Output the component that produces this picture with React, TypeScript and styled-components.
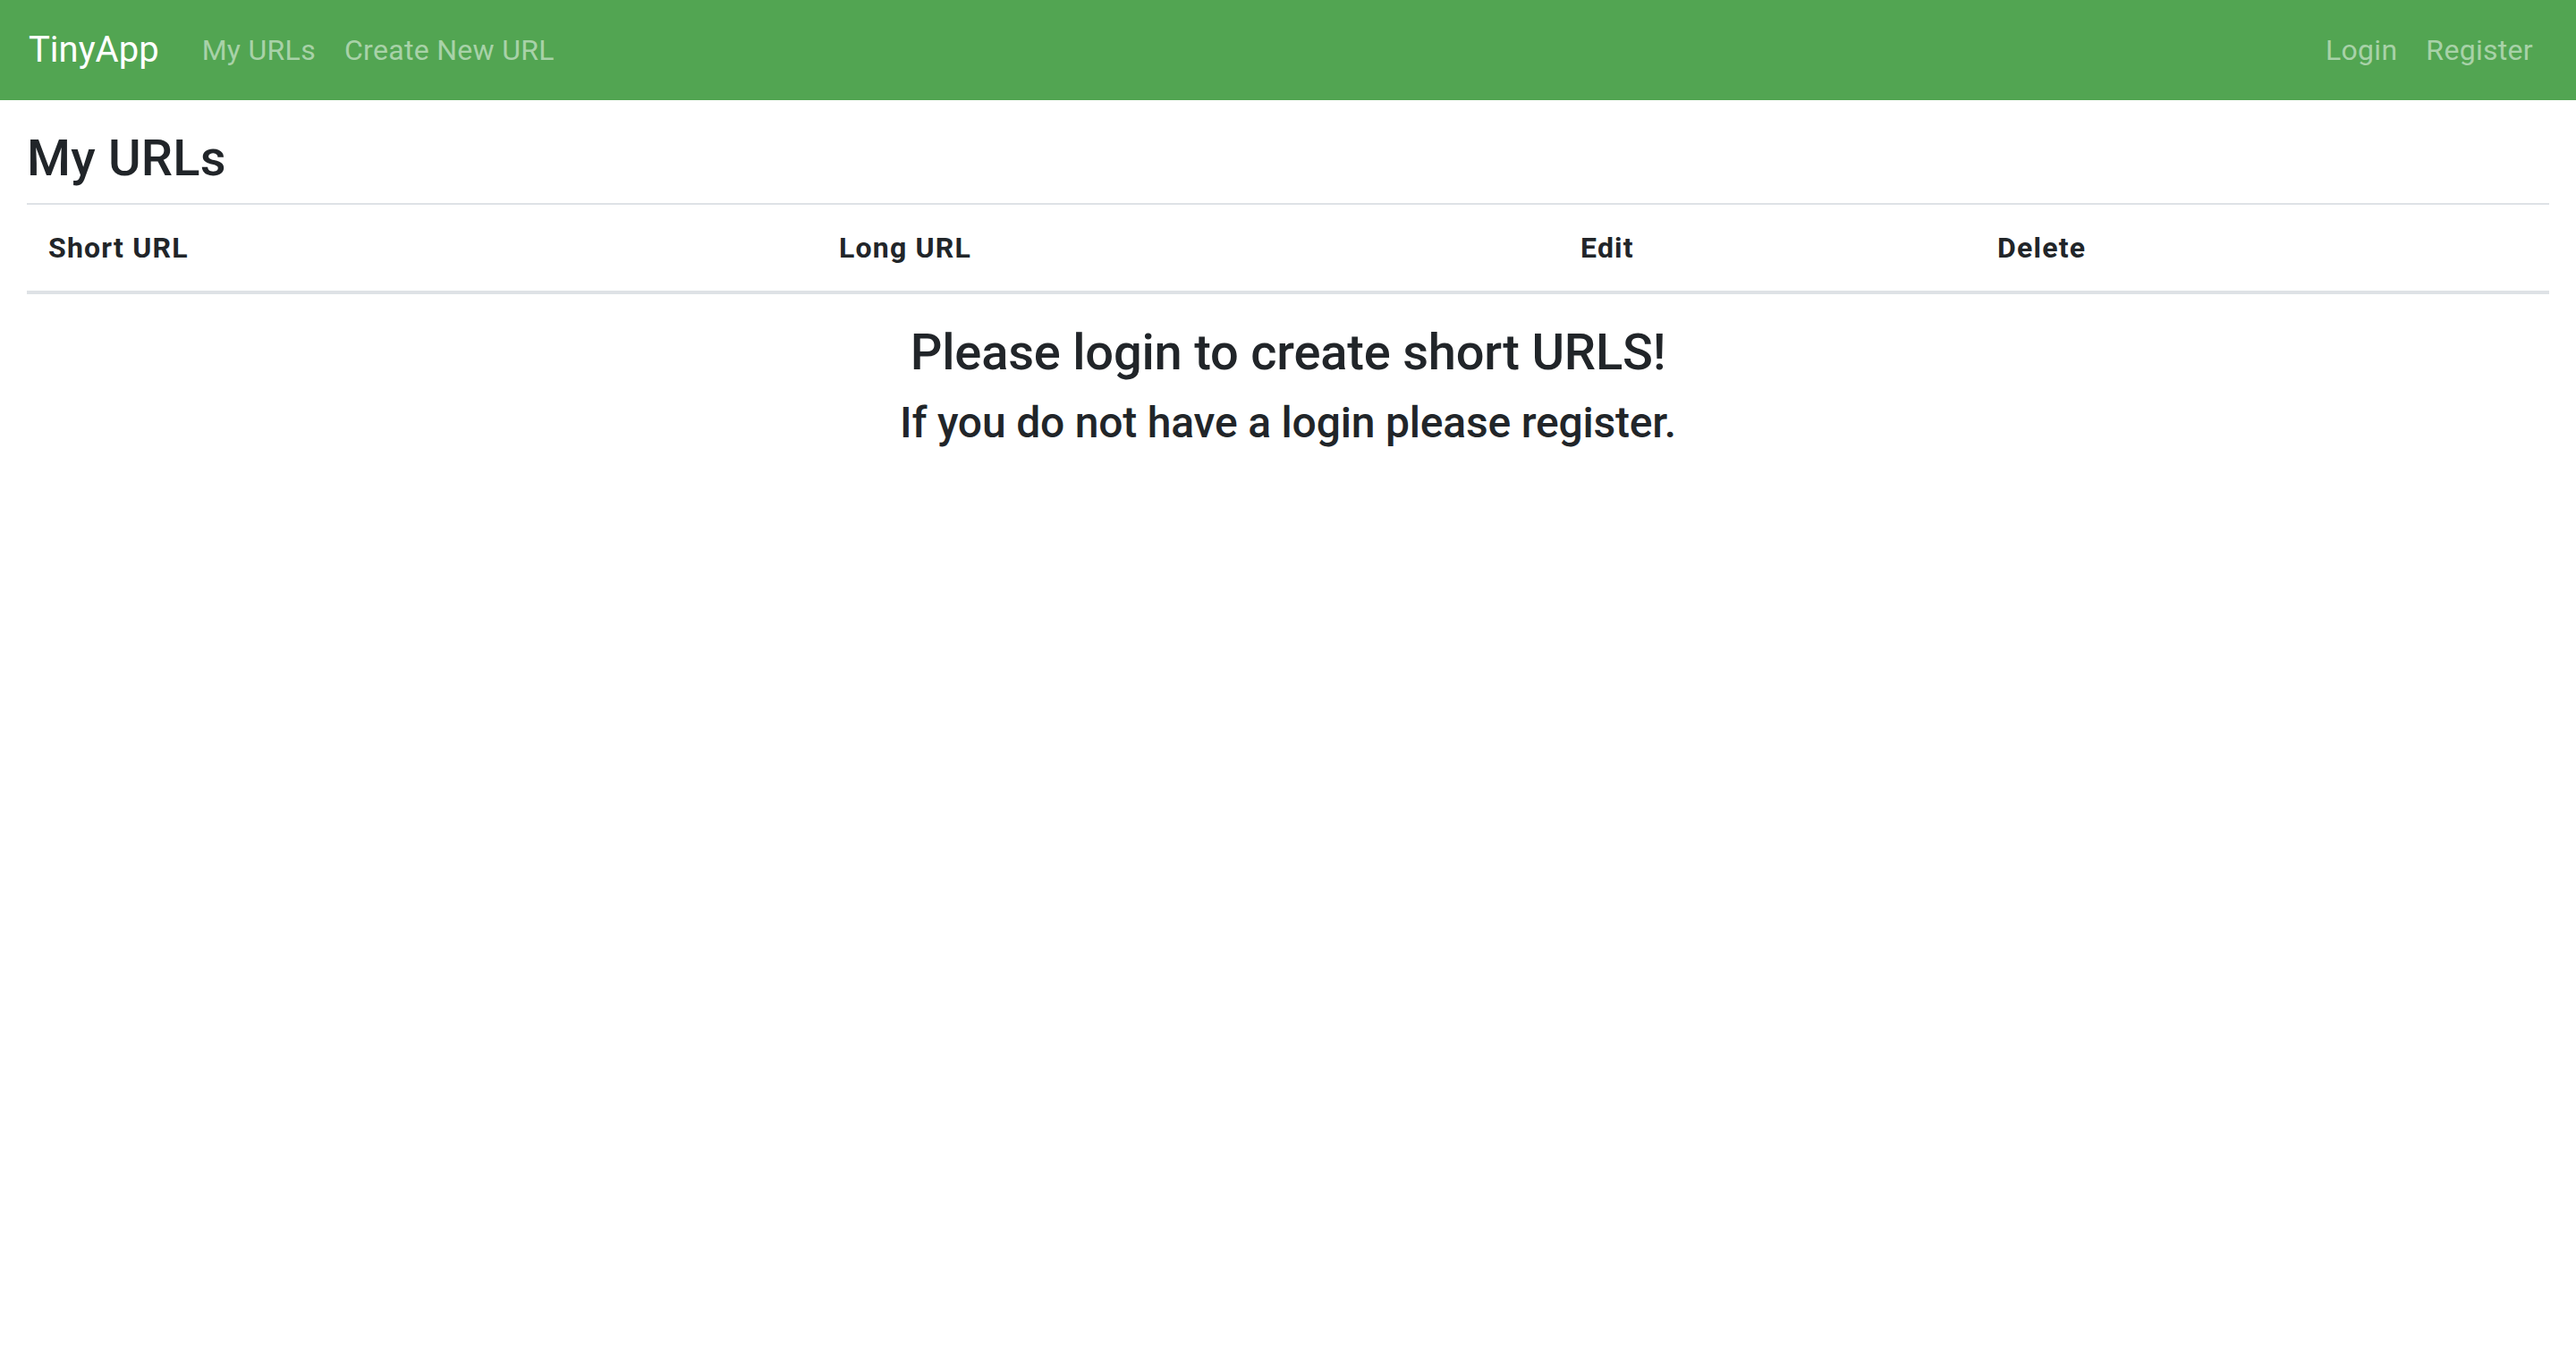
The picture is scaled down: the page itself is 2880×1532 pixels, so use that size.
import React from 'react';
import styled, { createGlobalStyle } from 'styled-components';

const GlobalStyle = createGlobalStyle`
  html, body {
    margin: 0;
    padding: 0;
    background: #fff;
  }
  body {
    font-family: Roboto, "Liberation Sans", sans-serif;
    color: #212529;
    -webkit-font-smoothing: antialiased;
  }
  * { box-sizing: border-box; }
`;

const columns = ['Short URL', 'Long URL', 'Edit', 'Delete'];

const Navbar = styled.nav`
  display: flex;
  align-items: center;
  height: 112px;
  padding: 0 32px;
  background: #52a552;
`;

const Brand = styled.a`
  font-size: 40px;
  line-height: 1.5;
  color: #fff;
  margin-right: 32px;
  text-decoration: none;
`;

const NavList = styled.div<{ $right?: boolean }>`
  display: flex;
  margin-left: ${(p) => (p.$right ? 'auto' : '0')};
`;

const NavLink = styled.a`
  padding: 0 16px;
  font-size: 32px;
  line-height: 1.5;
  letter-spacing: 0.3px;
  color: rgba(255, 255, 255, 0.5);
  text-decoration: none;
`;

const Main = styled.main`
  padding: 0 30px;
`;

const Title = styled.h3`
  margin: 32px 0 16px;
  font-size: 56px;
  font-weight: 500;
  line-height: 1.2;
  letter-spacing: 0.2px;
`;

const HeadRow = styled.div`
  display: grid;
  grid-template-columns: 884fr 829fr 466fr 641fr;
  border-top: 2px solid #dee2e6;
  border-bottom: 4px solid #dee2e6;
  margin-bottom: 32px;
`;

const HeadCell = styled.div`
  padding: 24px;
  font-size: 32px;
  font-weight: 700;
  line-height: 1.5;
  letter-spacing: 1.2px;
`;

const Message = styled.div`
  text-align: center;
`;

const Notice = styled.h3`
  margin: 0 0 16px;
  font-size: 56px;
  font-weight: 500;
  line-height: 1.2;
  letter-spacing: -0.2px;
`;

const Hint = styled.h4`
  margin: 0 0 16px;
  font-size: 48px;
  font-weight: 500;
  line-height: 1.2;
  letter-spacing: -0.2px;
`;

const App = () => {
  return (
    <>
      <GlobalStyle />
      <Navbar>
        <Brand href="#">TinyApp</Brand>
        <NavList>
          <NavLink href="#">My URLs</NavLink>
          <NavLink href="#">Create New URL</NavLink>
        </NavList>
        <NavList $right>
          <NavLink href="#">Login</NavLink>
          <NavLink href="#">Register</NavLink>
        </NavList>
      </Navbar>
      <Main>
        <Title>My URLs</Title>
        <HeadRow>
          {columns.map((c) => (
            <HeadCell key={c}>{c}</HeadCell>
          ))}
        </HeadRow>
        <Message>
          <Notice>Please login to create short URLS!</Notice>
          <Hint>If you do not have a login please register.</Hint>
        </Message>
      </Main>
    </>
  );
};

export default App;
